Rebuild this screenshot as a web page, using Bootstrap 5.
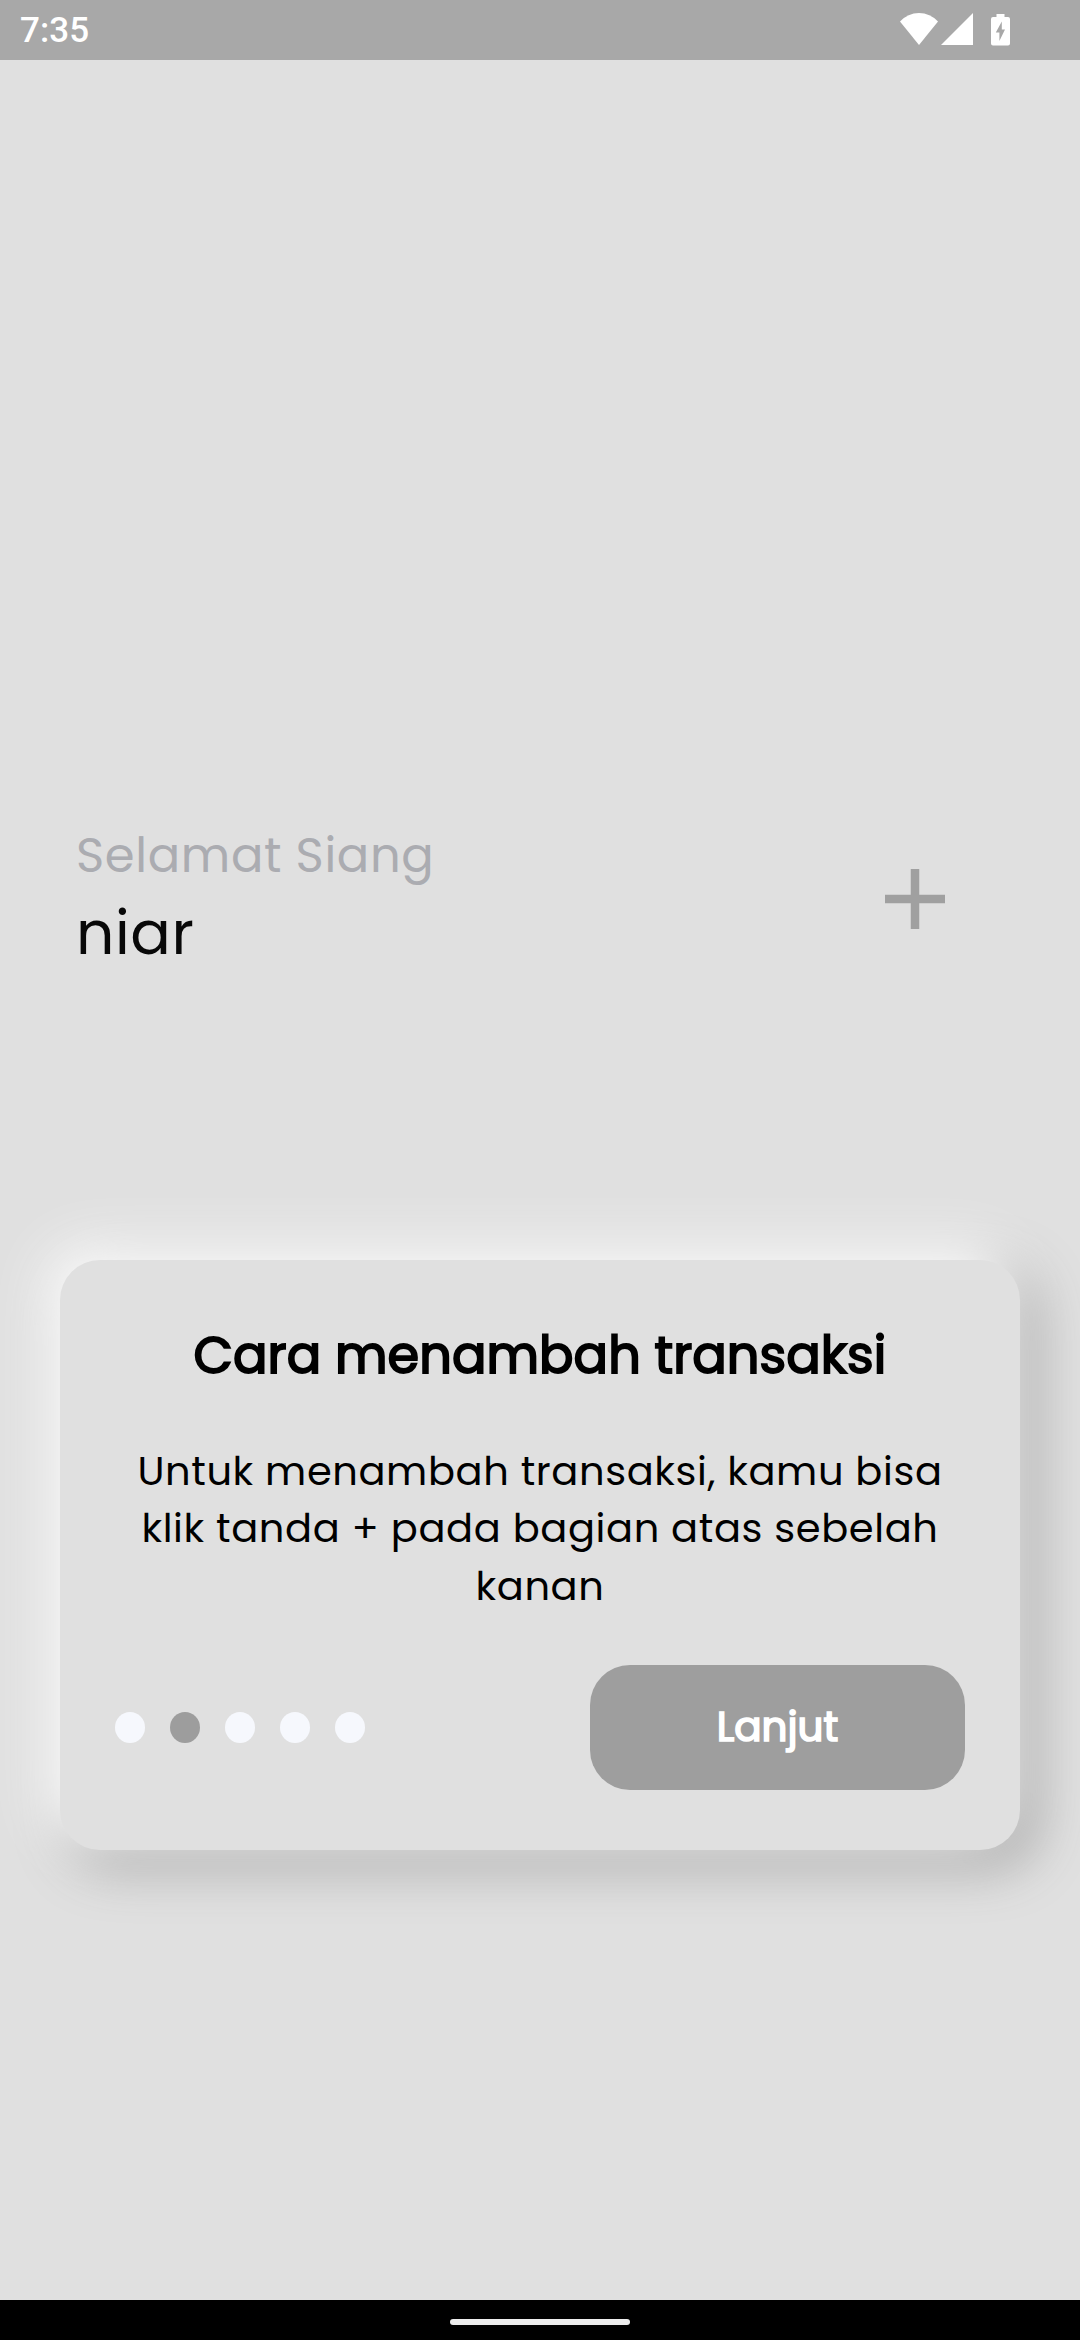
<!DOCTYPE html>
<html lang="id">
<head>
<meta charset="utf-8">
<meta name="viewport" content="width=device-width, initial-scale=1">
<title>Cara menambah transaksi</title>
<link href="https://cdn.jsdelivr.net/npm/bootstrap@5.3.0/dist/css/bootstrap.min.css" rel="stylesheet">
<style>
  body { background: #e0e0e0; font-family: Poppins, Inter, sans-serif; font-feature-settings: "cv11"; color: #000; overflow: hidden; }
  .status-bar { height: 60px; background: #a8a8a8; padding: 0 70px 0 20px; color: #fff; }
  .clock { font: 500 35px/62px Roboto, sans-serif; letter-spacing: .1px; }
  .greeting-row { padding: 764px 135px 0 76px; }
  .greet-time { font-size: 48px; line-height: 64px; font-weight: 400; color: #abacb1; letter-spacing: .65px; }
  .greet-name { font-size: 60px; line-height: 80px; letter-spacing: .6px; color: #080808; margin-top: 5px; }
  .plus-icon { margin-top: 45px; }
  .guide-card { margin: 287px 60px 0; height: 590px; padding: 60px 55px; border-radius: 40px; background: #e0e0e0;
    box-shadow: -12px -12px 53px 3px #fff, 12px 12px 53px 3px #9e9e9e; }
  .guide-title { font-size: 51px; line-height: 71px; font-weight: 400; -webkit-text-stroke: 1.9px #000; letter-spacing: .07px; }
  .guide-text { font-size: 40px; line-height: 57.5px; margin-top: 51.5px; letter-spacing: .6px; }
  .guide-text span { display: block; white-space: nowrap; }
  .dot { width: 30px; height: 31px; border-radius: 50%; background: #f6f8fd; }
  .dot.active { background: #9d9d9d; }
  .dots { gap: 25px; }
  .next-btn { width: 375px; height: 125px; border-radius: 40px; background: #9e9e9e; color: #fff; font-size: 40.5px; font-weight: 400; -webkit-text-stroke: 1.7px #fff; border: 0; padding: 0; }
  .home-bar { height: 40px; background: #000; padding-top: 11px; }
  .home-pill { width: 180px; height: 6px; background: #ececec; }
</style>
</head>
<body>
<div class="vh-100 d-flex flex-column">
  <header class="status-bar d-flex justify-content-between flex-shrink-0">
    <span class="clock">7:35</span>
    <svg width="110" height="60" viewBox="900 0 110 60" fill="#fff">
      <path d="M900 21.5Q908 13 919 13t19 8.500L919 45z"/>
      <path d="M973 13v32h-32z"/>
      <path fill-rule="evenodd" d="M996.500 14h8v3h3.500q2 0 2 2v24.500q0 2-2 2h-15q-2 0-2-2V19q0-2 2-2h3.500zM1001.800 21.500l-6 11h3.600v8.500l5.600-11.500h-3.200z"/>
    </svg>
  </header>
  <main class="flex-grow-1">
    <section class="greeting-row d-flex justify-content-between">
      <div>
        <div class="greet-time">Selamat Siang</div>
        <div class="greet-name">niar</div>
      </div>
      <svg class="plus-icon" width="60" height="60" viewBox="0 0 60 60" stroke="#a0a0a0" stroke-width="8.500"><path d="M0 30h60M30 0v60"/></svg>
    </section>
    <section class="guide-card d-flex flex-column">
      <h1 class="guide-title text-center mb-0">Cara menambah transaksi</h1>
      <p class="guide-text text-center mb-0"><span>Untuk menambah transaksi, kamu bisa</span> <span>klik tanda + pada bagian atas sebelah</span> <span>kanan</span></p>
      <div class="d-flex justify-content-between align-items-center mt-auto">
        <div class="dots d-flex">
          <span class="dot"></span><span class="dot active"></span><span class="dot"></span><span class="dot"></span><span class="dot"></span>
        </div>
        <button type="button" class="btn next-btn">Lanjut</button>
      </div>
    </section>
  </main>
  <footer class="home-bar d-flex justify-content-center flex-shrink-0 align-items-start"><div class="home-pill rounded-pill mt-2"></div></footer>
</div>
<script src="https://cdn.jsdelivr.net/npm/bootstrap@5.3.0/dist/js/bootstrap.bundle.min.js"></script>
</body>
</html>
